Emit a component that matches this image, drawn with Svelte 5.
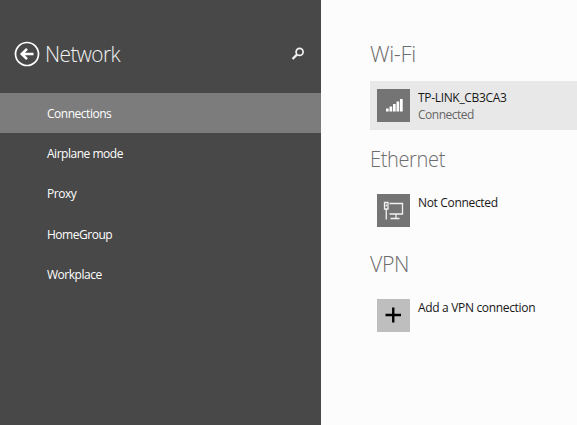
<script>
  let active = 'Connections';

  const menu = ['Connections', 'Airplane mode', 'Proxy', 'HomeGroup', 'Workplace'];

  const sections = [
    { title: 'Wi-Fi', icon: 'wifi', name: 'TP-LINK_CB3CA3', status: 'Connected', selected: true },
    { title: 'Ethernet', icon: 'ethernet', name: 'Not Connected' },
    { title: 'VPN', icon: 'add', name: 'Add a VPN connection' }
  ];
</script>

<div class="settings">
  <aside>
    <header>
      <button class="back" aria-label="Back">
        <svg width="26" height="26" viewBox="0 0 26 26">
          <circle cx="13" cy="13" r="11.5" fill="none" stroke="#fff" stroke-width="1.7" />
          <path d="M19.500 13H8.500M13 7.800L7.800 13l5.200 5.200" fill="none" stroke="#fff" stroke-width="2.600" />
        </svg>
      </button>
      <h1>Network</h1>
      <button class="search" aria-label="Search">
        <svg width="14" height="14" viewBox="0 0 14 14">
          <circle cx="8.6" cy="4.9" r="3.5" fill="none" stroke="#f2f2f2" stroke-width="1.700" />
          <path d="M6 7.6L1.500 12" stroke="#f2f2f2" stroke-width="2.300" />
        </svg>
      </button>
    </header>
    <nav>
      {#each menu as item}
        <button class="item" class:active={item === active} on:click={() => (active = item)}>
          {item}
        </button>
      {/each}
    </nav>
  </aside>

  <main>
    {#each sections as section}
      <section>
        <h2 class={section.icon}>{section.title}</h2>
        <div class="row" class:selected={section.selected}>
          <div class="tile" class:light={section.icon === 'add'}>
            <svg width="32" height="32" viewBox="0 0 32 32">
              {#if section.icon === 'wifi'}
                <path
                  d="M9 19.500h2.700v3H9zM12.500 17.500h2.700v5h-2.700zM16 15h2.700v7.500H16zM19.500 12.500h2.700v10h-2.700zM23 10h2.700v12.500H23z"
                  fill="#fff"
                />
              {:else if section.icon === 'ethernet'}
                <path
                  d="M12.500 9.500h13v10.500h-13M19 20v4.500M13.500 24.500h9M7.500 8.500h3.500v6.500h-3.500zM9.250 10.500v2M9.250 15v10.500"
                  fill="none"
                  stroke="#f2f2f2"
                  stroke-width="1.300"
                />
              {:else}
                <path d="M8.500 16h15.500M16.250 8.500v15" stroke="#000" stroke-width="2.400" />
              {/if}
            </svg>
          </div>
          <div class="text">
            <span class="name">{section.name}</span>
            {#if section.status}
              <span class="status">{section.status}</span>
            {/if}
          </div>
        </div>
      </section>
    {/each}
  </main>
</div>

<style>
  .settings {
    display: flex;
    width: 577px;
    height: 425px;
    overflow: hidden;
    background: #fcfcfc;
    font-family: 'Open Sans', 'Noto Sans', sans-serif;
    font-size: 12px;
  }

  button {
    padding: 0;
    border: none;
    background: none;
    color: inherit;
    font: inherit;
    cursor: pointer;
  }

  svg {
    display: block;
  }

  aside {
    width: 321px;
    flex: none;
    background: #484848;
    color: #fff;
  }

  header {
    display: flex;
    align-items: center;
    box-sizing: border-box;
    height: 93px;
    padding: 14px 16px 0 14px;
  }

  h1,
  h2 {
    margin: 0;
    font-size: 22px;
    font-weight: 300;
    line-height: 30px;
    transform-origin: left;
  }

  h1 {
    margin: 0 0 2px 5px;
    color: #f2f2f2;
    letter-spacing: -0.6px;
    transform: scaleX(0.95);
  }

  .search {
    margin-left: auto;
  }

  nav {
    display: flex;
    flex-direction: column;
  }

  .item {
    height: 40.3px;
    padding-left: 47px;
    text-align: left;
    letter-spacing: -0.48px;
  }

  .item.active {
    background: #7c7c7c;
  }

  main {
    flex: 1;
    padding: 38px 0 0 49px;
  }

  section {
    height: 105px;
  }

  h2 {
    color: #6c6c6c;
    letter-spacing: -0.4px;
  }

  h2.ethernet {
    transform: scaleX(0.91);
  }

  h2.add {
    transform: scaleX(0.97);
  }

  .row {
    display: flex;
    box-sizing: border-box;
    height: 49px;
    margin-top: 13px;
    padding: 8px 0 0 7px;
  }

  .row.selected {
    background: #e8e8e8;
  }

  .tile {
    width: 33px;
    height: 33px;
    flex: none;
    background: #747474;
  }

  .tile.light {
    background: #bebebe;
  }

  .text {
    display: flex;
    flex-direction: column;
    margin: 1px 0 0 8px;
    line-height: 16px;
    letter-spacing: -0.33px;
    white-space: nowrap;
  }

  .name {
    color: #181818;
  }

  .status {
    margin-top: 1px;
    color: #666;
    letter-spacing: -0.5px;
  }
</style>
